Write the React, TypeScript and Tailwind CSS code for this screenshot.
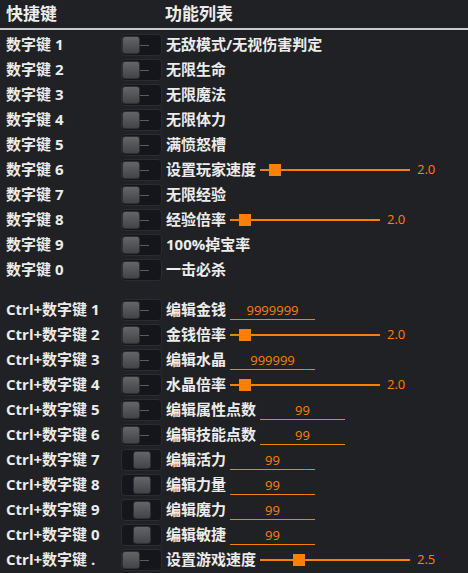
import React from "react";

type Row =
  | { key: string; label: string; knob?: "left" | "mid"; kind?: "none" }
  | { key: string; label: string; knob?: "left" | "mid"; kind: "slider"; value: string; pos: number }
  | { key: string; label: string; knob?: "left" | "mid"; kind: "input"; value: string };

const numRows: Row[] = [
  { key: "数字键 1", label: "无敌模式/无视伤害判定" },
  { key: "数字键 2", label: "无限生命" },
  { key: "数字键 3", label: "无限魔法" },
  { key: "数字键 4", label: "无限体力" },
  { key: "数字键 5", label: "满愤怒槽" },
  { key: "数字键 6", label: "设置玩家速度", kind: "slider", value: "2.0", pos: 9 },
  { key: "数字键 7", label: "无限经验" },
  { key: "数字键 8", label: "经验倍率", kind: "slider", value: "2.0", pos: 9 },
  { key: "数字键 9", label: "100%掉宝率" },
  { key: "数字键 0", label: "一击必杀" },
];

const ctrlRows: Row[] = [
  { key: "Ctrl+数字键 1", label: "编辑金钱", kind: "input", value: "9999999" },
  { key: "Ctrl+数字键 2", label: "金钱倍率", kind: "slider", value: "2.0", pos: 9 },
  { key: "Ctrl+数字键 3", label: "编辑水晶", kind: "input", value: "999999" },
  { key: "Ctrl+数字键 4", label: "水晶倍率", kind: "slider", value: "2.0", pos: 9 },
  { key: "Ctrl+数字键 5", label: "编辑属性点数", kind: "input", value: "99" },
  { key: "Ctrl+数字键 6", label: "编辑技能点数", kind: "input", value: "99" },
  { key: "Ctrl+数字键 7", label: "编辑活力", kind: "input", value: "99", knob: "mid" },
  { key: "Ctrl+数字键 8", label: "编辑力量", kind: "input", value: "99", knob: "mid" },
  { key: "Ctrl+数字键 9", label: "编辑魔力", kind: "input", value: "99", knob: "mid" },
  { key: "Ctrl+数字键 0", label: "编辑敏捷", kind: "input", value: "99", knob: "mid" },
  { key: "Ctrl+数字键 .", label: "设置游戏速度", kind: "slider", value: "2.5", pos: 33 },
];

const Toggle = ({ knob = "left" }: { knob?: "left" | "mid" }) => (
  <div className="relative h-[22px] w-[41px] shrink-0 rounded-[4px] border border-[#2a2c31] bg-[#14161b]">
    {knob === "left" && (
      <div className="absolute left-[18px] top-[10px] h-px w-[9px] bg-[#5a5c60]" />
    )}
    <div
      className={`absolute top-[1px] h-[18px] w-[18px] rounded-[3px] border border-[#2e3033] bg-gradient-to-b from-[#636567] to-[#424446] ${
        knob === "mid" ? "left-[11px]" : "left-0"
      }`}
    />
  </div>
);

const Slider = ({ pos }: { pos: number }) => (
  <div className="relative h-[12px] w-[150px]">
    <div className="absolute left-0 right-0 top-[5px] h-[2px] bg-[#ff7f00]" />
    <div className="absolute top-0 h-[12px] w-[12px] bg-[#ff7f00]" style={{ left: pos }} />
  </div>
);

const RowView = ({ row }: { row: Row }) => (
  <div className="flex h-[25px] items-center">
    <div className="w-[121px] shrink-0 pl-[6px] text-[15px] font-bold text-[#ececec]">{row.key}</div>
    <Toggle knob={row.knob} />
    <div className="ml-[4px] text-[15px] font-bold text-[#ececec]">{row.label}</div>
    {row.kind === "slider" && (
      <div className="ml-[4px] flex items-center">
        <Slider pos={row.pos} />
        <span className="ml-[7px] text-[13px] text-[#ff7f00]">{row.value}</span>
      </div>
    )}
    {row.kind === "input" && (
      <div className="ml-[4px] mt-[2px] flex h-[19px] w-[85px] items-center justify-center border-b border-[#ff7f00] text-[13px] leading-none text-[#ff7f00]">
        {row.value}
      </div>
    )}
  </div>
);

export default function App() {
  return (
    <div
      className="h-[573px] w-[468px] overflow-hidden bg-[#202124]"
      style={{ fontFamily: '"Open Sans", "Noto Sans CJK SC", sans-serif' }}
    >
      <div className="flex h-[30px] items-center border-b-2 border-[#c9c9c9] pb-[1px]">
        <div className="w-[165px] pl-[6px] text-[17px] font-bold text-[#ececec]">快捷键</div>
        <div className="text-[17px] font-bold text-[#ececec]">功能列表</div>
      </div>
      <div className="pt-[2px]">
        {numRows.map((r) => (
          <RowView key={r.key} row={r} />
        ))}
      </div>
      <div className="pt-[15px]">
        {ctrlRows.map((r) => (
          <RowView key={r.key} row={r} />
        ))}
      </div>
    </div>
  );
}
